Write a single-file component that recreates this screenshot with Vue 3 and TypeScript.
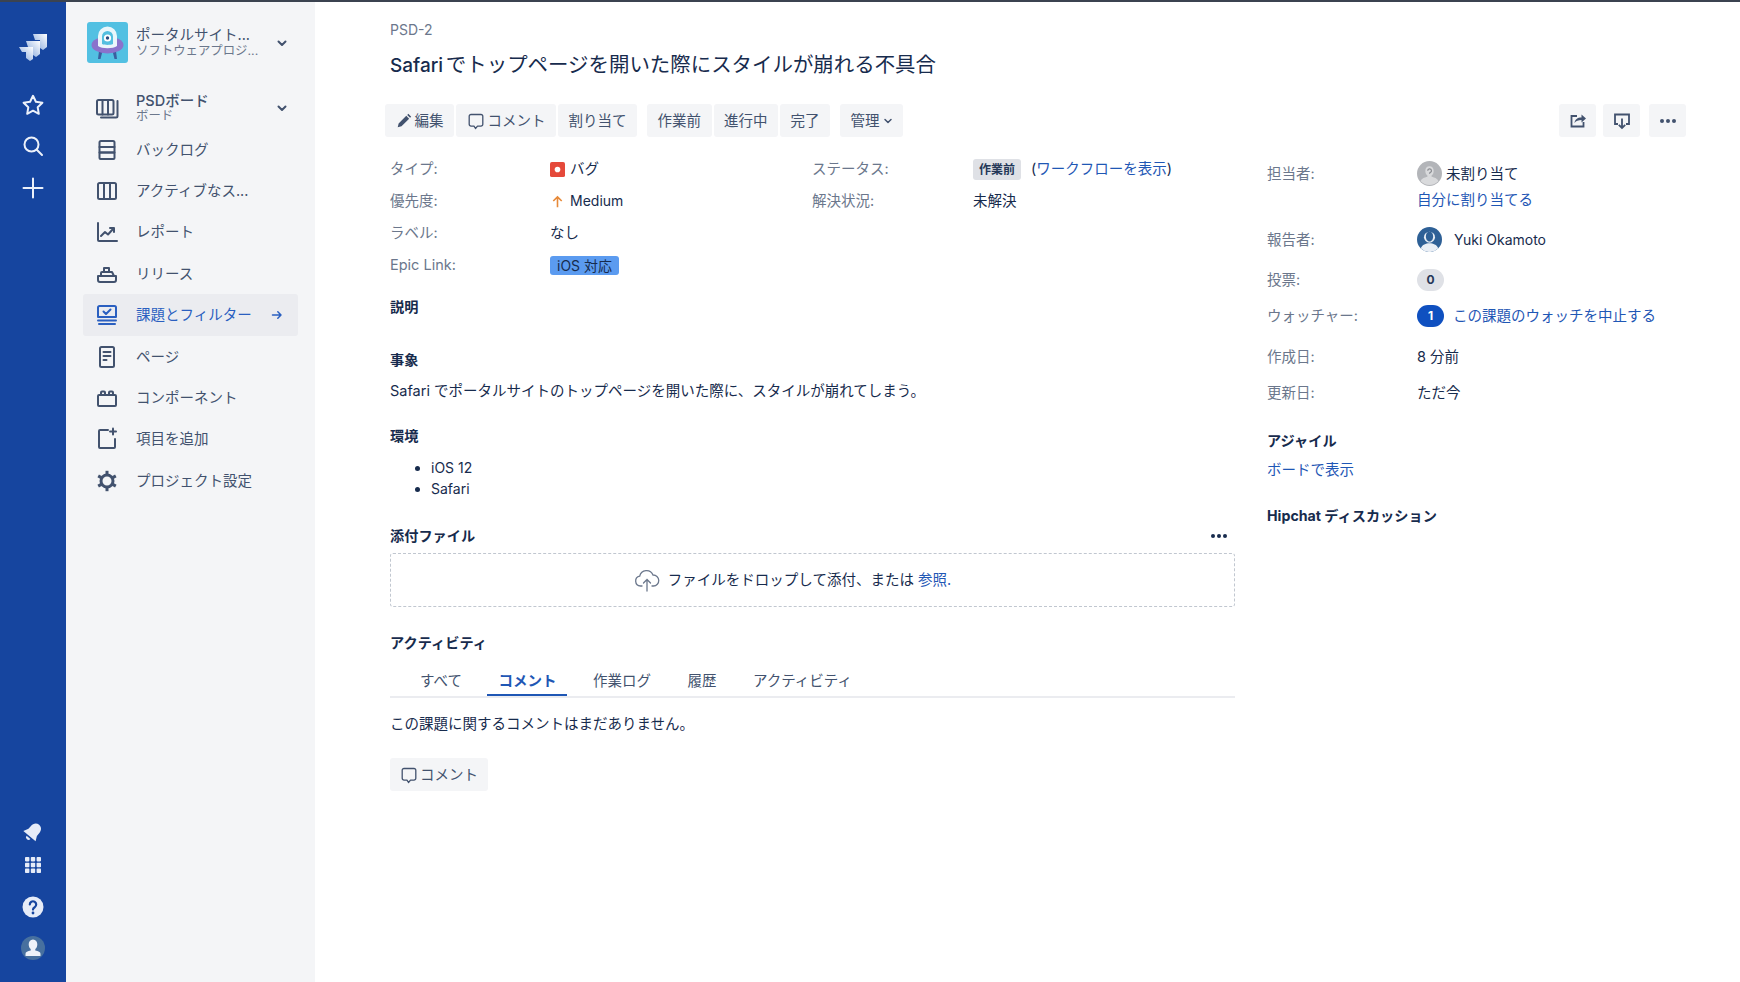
<script setup lang="ts">
interface NavItem {
  label: string;
  paths: string[];
  active?: boolean;
  heavy?: boolean;
}

const navItems: NavItem[] = [
  {
    label: "バックログ",
    paths: [
      "M6 3h12a1.500 1.500 0 0 1 1.500 1.500V9H4.500V4.500A1.500 1.500 0 0 1 6 3z",
      "M4.500 9h15v5.500h-15z",
      "M4.500 14.500h15V20a1 1 0 0 1-1 1h-13a1 1 0 0 1-1-1z",
    ],
  },
  {
    label: "アクティブなス...",
    paths: ["M4.500 4h15A1.500 1.500 0 0 1 21 5.500v13a1.500 1.500 0 0 1-1.500 1.500h-15A1.500 1.500 0 0 1 3 18.500v-13A1.500 1.500 0 0 1 4.500 4z", "M9 4v16", "M15 4v16"],
  },
  {
    label: "レポート",
    paths: ["M3 3v17a1 1 0 0 0 1 1h18", "M6 16l4-4 3 2.500 5-5.500", "M15 8h4v4"],
  },
  {
    label: "リリース",
    paths: ["M3 14h18v4a2 2 0 0 1-2 2H5a2 2 0 0 1-2-2z", "M6 14v-3a1 1 0 0 1 1-1h10l2 4", "M9 10V6h5v4"],
  },
  {
    label: "課題とフィルター",
    active: true,
    paths: ["M4.500 3h15A1.500 1.500 0 0 1 21 4.500V14H3V4.500A1.500 1.500 0 0 1 4.500 3z", "M8.500 8.500l2.500 2.500 4.500-4.500", "M3 17.500h18", "M4 21h16"],
  },
  {
    label: "ページ",
    paths: ["M6.500 2h11A1.500 1.500 0 0 1 19 3.500v17a1.500 1.500 0 0 1-1.500 1.500h-11A1.500 1.500 0 0 1 5 20.500v-17A1.500 1.500 0 0 1 6.500 2z", "M8.500 7h7", "M8.500 11h7", "M8.500 15h3"],
  },
  {
    label: "コンポーネント",
    paths: ["M4 9h16a1 1 0 0 1 1 1v9a1 1 0 0 1-1 1H4a1 1 0 0 1-1-1v-9a1 1 0 0 1 1-1z", "M6 9V6.500a1 1 0 0 1 1-1h2a1 1 0 0 1 1 1V9", "M14 9V6.500a1 1 0 0 1 1-1h2a1 1 0 0 1 1 1V9"],
  },
  {
    label: "項目を追加",
    paths: ["M13 3H5a1 1 0 0 0-1 1v16a1 1 0 0 0 1 1h14a1 1 0 0 0 1-1v-8", "M18 1.500v6", "M15 4.500h6"],
  },
  {
    label: "プロジェクト設定",
    heavy: true,
    paths: [
      "M12 6a6 6 0 1 0 0 12 6 6 0 0 0 0-12z",
      "M12 1.800v4",
      "M12 18.200v4",
      "M3.200 6.900l3.500 2",
      "M17.300 15.100l3.500 2",
      "M3.200 17.100l3.500-2",
      "M17.300 8.900l3.500-2",
    ],
  },
];

const detailRows = [
  { label: "タイプ:", value: "バグ", kind: "bug" },
  { label: "優先度:", value: "Medium", kind: "priority" },
  { label: "ラベル:", value: "なし", kind: "plain" },
  { label: "Epic Link:", value: "iOS 対応", kind: "epic" },
];

const tabs = ["すべて", "コメント", "作業ログ", "履歴", "アクティビティ"];
</script>

<template>
  <div class="page">
    <aside class="rail">
      <div class="rail-group top">
        <svg class="logo" viewBox="0 0 30 30" width="30" height="30">
          <defs>
            <linearGradient id="logoFade" x1="1" y1="0" x2="0" y2="1">
              <stop offset="0" stop-color="#ffffff" />
              <stop offset="1" stop-color="#7da2da" />
            </linearGradient>
          </defs>
          <path d="M15 2h14v13l-4 3-3-2V8h-5z" fill="url(#logoFade)" />
          <path d="M8 9h14v13l-4 3-3-2v-8h-5z" fill="url(#logoFade)" />
          <path d="M1 15h14v12l-3 2-4-3v-6H4z" fill="url(#logoFade)" />
        </svg>
        <svg class="rail-icon star" viewBox="0 0 24 24" width="24" height="24">
          <path d="M12 2.800l2.900 6 6.500.9-4.700 4.600 1.100 6.500-5.800-3.100-5.800 3.100 1.100-6.500-4.700-4.600 6.500-.9z" fill="none" stroke="#ecf1fa" stroke-width="2" stroke-linejoin="round" />
        </svg>
        <svg class="rail-icon search" viewBox="0 0 24 24" width="24" height="24">
          <circle cx="10.500" cy="10.500" r="7" fill="none" stroke="#ecf1fa" stroke-width="2" />
          <path d="M15.800 15.800l5.200 5.200" stroke="#ecf1fa" stroke-width="2" stroke-linecap="round" />
        </svg>
        <svg class="rail-icon plus" viewBox="0 0 24 24" width="24" height="24">
          <path d="M12 2.500v19M2.500 12h19" stroke="#ecf1fa" stroke-width="2" stroke-linecap="round" />
        </svg>
      </div>
      <div class="rail-group bottom">
        <svg class="rail-icon" viewBox="0 0 24 24" width="24" height="24">
          <g transform="rotate(40 12 12)" fill="#e6ecf8">
            <path d="M12 2.500c3.500 0 5.500 2.800 5.500 6.500v3.500l2.500 5H4l2.500-5V9c0-3.700 2-6.500 5.500-6.500z" />
            <path d="M9.500 19h5a2.500 2.500 0 0 1-5 0z" />
          </g>
        </svg>
        <svg class="rail-icon" viewBox="0 0 24 24" width="24" height="24">
          <g fill="#e6ecf8">
            <rect x="4" y="4" width="4.400" height="4.400" rx=".8" />
            <rect x="9.800" y="4" width="4.400" height="4.400" rx=".8" />
            <rect x="15.600" y="4" width="4.400" height="4.400" rx=".8" />
            <rect x="4" y="9.800" width="4.400" height="4.400" rx=".8" />
            <rect x="9.800" y="9.800" width="4.400" height="4.400" rx=".8" />
            <rect x="15.600" y="9.800" width="4.400" height="4.400" rx=".8" />
            <rect x="4" y="15.600" width="4.400" height="4.400" rx=".8" />
            <rect x="9.800" y="15.600" width="4.400" height="4.400" rx=".8" />
            <rect x="15.600" y="15.600" width="4.400" height="4.400" rx=".8" />
          </g>
        </svg>
        <svg class="rail-icon" viewBox="0 0 24 24" width="24" height="24">
          <circle cx="12" cy="12" r="10.500" fill="#e6ecf8" />
          <path d="M8.800 9.500a3.200 3.200 0 1 1 4.900 2.700c-1.100.7-1.700 1.200-1.700 2.400" fill="none" stroke="#16459f" stroke-width="2.200" stroke-linecap="round" />
          <circle cx="12" cy="18" r="1.400" fill="#16459f" />
        </svg>
        <svg class="rail-icon profile" viewBox="0 0 24 24" width="24" height="24">
          <circle cx="12" cy="12" r="12" fill="#47709f" />
          <path d="M12 3.500c2.800 0 4.300 2.200 4.300 4.800 0 2.200-.8 3.900-2 4.800v1.400c3 .7 5.200 1.500 5.200 3.300V20h-15v-2.200c0-1.800 2.200-2.600 5.200-3.300v-1.400c-1.200-.9-2-2.600-2-4.800 0-2.600 1.500-4.800 4.300-4.800z" fill="#eef2f9" />
        </svg>
      </div>
    </aside>

    <nav class="side">
      <div class="project">
        <svg class="project-avatar" viewBox="0 0 41 41" width="41" height="41">
          <rect width="41" height="41" rx="3" fill="#52c0e2" />
          <path d="M12 29l-1 8h2.500l2-8zM29 29l1 8h-2.500l-2-8z" fill="#3a5f9f" />
          <ellipse cx="20.500" cy="23" rx="16" ry="8.500" fill="#8a72cc" />
          <path d="M11 24V14a9.500 9.500 0 0 1 19 0v10c-4 3-15 3-19 0z" fill="#eaf6fb" />
          <path d="M15 22v-7.500a5.500 5.500 0 0 1 11 0V22c-3 1.200-8 1.200-11 0z" fill="#54bfe0" />
          <circle cx="20.500" cy="16" r="3.600" fill="#fff" />
          <circle cx="20.500" cy="16" r="1.700" fill="#2c4a80" />
        </svg>
        <div class="project-text">
          <span class="project-name">ポータルサイト...</span>
          <span class="sub">ソフトウェアプロジ...</span>
        </div>
        <svg class="chev" viewBox="0 0 12 12" width="12" height="12">
          <path d="M2.500 4.500L6 8l3.500-3.500" fill="none" stroke="#42526e" stroke-width="2" stroke-linecap="round" stroke-linejoin="round" />
        </svg>
      </div>

      <ul class="nav-list">
        <li class="nav-row">
          <svg class="nav-icon" viewBox="0 0 24 24" width="24" height="24">
            <path d="M3.500 4H17a1.500 1.500 0 0 1 1.500 1.500V17a1.500 1.500 0 0 1-1.500 1.500H3.500A1.500 1.500 0 0 1 2 17V5.500A1.500 1.500 0 0 1 3.500 4z" />
            <path d="M7.500 4v14.500M13 4v14.500M22.500 5v15a1.500 1.500 0 0 1-1.500 1.500H6" />
          </svg>
          <div class="board-text">
            <span class="board-name">PSDボード</span>
            <span class="sub">ボード</span>
          </div>
          <svg class="chev" viewBox="0 0 12 12" width="12" height="12">
            <path d="M2.500 4.500L6 8l3.500-3.500" fill="none" stroke="#42526e" stroke-width="2" stroke-linecap="round" stroke-linejoin="round" />
          </svg>
        </li>
        <li v-for="item in navItems" :key="item.label" :class="['nav-row', { active: item.active }]">
          <svg :class="['nav-icon', { heavy: item.heavy }]" viewBox="0 0 24 24" width="24" height="24">
            <path v-for="d in item.paths" :key="d" :d="d" />
          </svg>
          <span>{{ item.label }}</span>
          <svg v-if="item.active" class="arrow" viewBox="0 0 12 12" width="12" height="12">
            <path d="M1.500 6h8.500M6.800 2.800L10 6 6.800 9.200" fill="none" stroke="#2a5fc0" stroke-width="1.500" stroke-linecap="round" stroke-linejoin="round" />
          </svg>
        </li>
      </ul>
    </nav>

    <main class="main">
      <div class="issue-key latin">PSD-2</div>
      <h1 class="title"><span class="title-latin">Safari</span> でトップページを開いた際にスタイルが崩れる不具合</h1>

      <div class="toolbar">
        <div class="btn-group">
          <button class="btn">
            <svg viewBox="0 0 14 14" width="16" height="16">
              <path d="M1.500 12.500l.8-3.300 6.700-6.700 2.500 2.500-6.700 6.700zM9.800 1.700l1-1 2.500 2.500-1 1z" fill="#42526e" />
            </svg>
            編集
          </button>
          <button class="btn">
            <svg viewBox="0 0 18 18" width="18" height="18">
              <path d="M4 2.500h10A1.800 1.800 0 0 1 15.800 4.300v8a1.800 1.800 0 0 1-1.800 1.800h-3.500L8.500 16.500 7 14.100H4a1.800 1.800 0 0 1-1.800-1.800v-8A1.800 1.800 0 0 1 4 2.500z" fill="none" stroke="#42526e" stroke-width="1.300" stroke-linejoin="round" />
            </svg>
            コメント
          </button>
          <button class="btn">割り当て</button>
        </div>
        <div class="btn-group">
          <button class="btn">作業前</button>
          <button class="btn">進行中</button>
          <button class="btn">完了</button>
        </div>
        <div class="btn-group">
          <button class="btn">
            管理
            <svg viewBox="0 0 10 10" width="10" height="10">
              <path d="M2 3.500L5 6.500l3-3" fill="none" stroke="#42526e" stroke-width="1.500" stroke-linecap="round" stroke-linejoin="round" />
            </svg>
          </button>
        </div>
        <div class="btn-group end">
          <button class="btn square">
            <svg viewBox="0 0 18 18" width="18" height="18">
              <path d="M8 4H2.500v10.500h12V10" fill="none" stroke="#42526e" stroke-width="1.800" />
              <path d="M5.500 11c.3-3.500 3-5.500 7-5.500V2.500L17 6.500l-4.500 4V8c-3 0-5.500.8-7 3z" fill="#42526e" />
            </svg>
          </button>
          <button class="btn square">
            <svg viewBox="0 0 18 18" width="18" height="18">
              <path d="M5 12H2V2.500h14V12h-3" fill="none" stroke="#42526e" stroke-width="1.800" />
              <path d="M9 6.500v9.500M5.800 12.800L9 16l3.200-3.200" fill="none" stroke="#42526e" stroke-width="1.800" />
            </svg>
          </button>
          <button class="btn square last">
            <span class="dots"><i></i><i></i><i></i></span>
          </button>
        </div>
      </div>

      <div class="columns">
        <section class="content">
          <div class="details">
            <template v-for="(row, i) in detailRows" :key="row.label">
              <span class="label">{{ row.label }}</span>
              <span class="value">
                <svg v-if="row.kind === 'bug'" class="type-icon" viewBox="0 0 16 16" width="15" height="15">
                  <rect width="16" height="16" rx="2" fill="#e5493a" />
                  <circle cx="8" cy="8" r="3" fill="#fff" />
                </svg>
                <svg v-if="row.kind === 'priority'" class="type-icon" viewBox="0 0 16 16" width="15" height="15">
                  <path d="M8 14V3M3.500 7.500L8 3l4.500 4.500" fill="none" stroke="#e78a3a" stroke-width="1.700" />
                </svg>
                <span v-if="row.kind === 'epic'" class="epic">{{ row.value }}</span>
                <span v-else-if="row.kind === 'priority'" class="latin">{{ row.value }}</span>
                <template v-else>{{ row.value }}</template>
              </span>
              <template v-if="i === 0">
                <span class="label">ステータス:</span>
                <span class="value">
                  <span class="status">作業前</span>
                  <span class="workflow">(<a>ワークフローを表示</a>)</span>
                </span>
              </template>
              <template v-else-if="i === 1">
                <span class="label">解決状況:</span>
                <span class="value">未解決</span>
              </template>
              <template v-else>
                <span></span>
                <span></span>
              </template>
            </template>
          </div>

          <h2 class="heading description">説明</h2>
          <h3 class="heading sub-section">事象</h3>
          <p class="para">Safari でポータルサイトのトップページを開いた際に、スタイルが崩れてしまう。</p>
          <h3 class="heading env">環境</h3>
          <ul class="env-list latin">
            <li>iOS 12</li>
            <li>Safari</li>
          </ul>

          <div class="attach-head">
            <h2 class="heading">添付ファイル</h2>
            <span class="dots dark"><i></i><i></i><i></i></span>
          </div>
          <div class="dropzone">
            <svg viewBox="0 0 26 24" width="26" height="24">
              <path d="M8 18H6.500a5 5 0 0 1-.8-9.900A7 7 0 0 1 19 7a5.500 5.500 0 0 1 .5 11H18" fill="none" stroke="#6b778c" stroke-width="1.300" stroke-linecap="round" />
              <path d="M13 23V11.500M9.500 15l3.500-3.500 3.500 3.500" fill="none" stroke="#6b778c" stroke-width="1.300" stroke-linecap="round" />
            </svg>
            <span>ファイルをドロップして添付、または <a>参照</a><a>.</a></span>
          </div>

          <h2 class="heading activity">アクティビティ</h2>
          <div class="tabs">
            <span v-for="tab in tabs" :key="tab" :class="['tab', { current: tab === 'コメント' }]">{{ tab }}</span>
          </div>
          <p class="para no-comment">この課題に関するコメントはまだありません。</p>
          <button class="btn comment-btn">
            <svg viewBox="0 0 18 18" width="18" height="18">
              <path d="M4 2.500h10A1.800 1.800 0 0 1 15.800 4.300v8a1.800 1.800 0 0 1-1.800 1.800h-3.500L8.500 16.500 7 14.100H4a1.800 1.800 0 0 1-1.800-1.800v-8A1.800 1.800 0 0 1 4 2.500z" fill="none" stroke="#42526e" stroke-width="1.300" stroke-linejoin="round" />
            </svg>
            コメント
          </button>
        </section>

        <aside class="meta">
          <div class="meta-row first">
            <span class="label">担当者:</span>
            <div>
              <div class="person">
                <svg viewBox="0 0 24 24" width="25" height="25">
                  <circle cx="12" cy="12" r="12" fill="#b3b5b9" />
                  <path d="M12 5c2.600 0 4 2 4 4.500 0 2-.8 3.500-2 4.500v1c3 .7 6 1.800 6.500 4.500a12 12 0 0 1-17 0C4 16.800 7 15.700 10 15v-1c-1.200-1-2-2.500-2-4.500C8 7 9.400 5 12 5z" fill="#d9dadc" />
                  <path d="M10.300 9.300a1.800 1.800 0 1 1 2.600 1.600c-.6.300-.9.700-.9 1.300" fill="none" stroke="#8d8f94" stroke-width="1.200" />
                </svg>
                <span class="unassigned">未割り当て</span>
              </div>
              <a class="assign-me">自分に割り当てる</a>
            </div>
          </div>
          <div class="meta-row reporter-row">
            <span class="label">報告者:</span>
            <div class="person">
              <svg viewBox="0 0 24 24" width="25" height="25">
                <circle cx="12" cy="12" r="12" fill="#2e6096" />
                <circle cx="12" cy="9.800" r="5.300" fill="#e9eef5" />
                <path d="M12 4.500c2.200 0 3.500 1.800 3.500 4.500 0 2.400-1.300 4.800-3.500 4.800S8.500 11.400 8.500 9c0-2.700 1.300-4.500 3.500-4.500z" fill="#2e6096" />
                <path d="M3.500 20.500C5 16.800 8.500 15.500 12 15.500s7 1.300 8.500 5a12 12 0 0 1-17 0z" fill="#e9eef5" />
              </svg>
              <span class="reporter latin">Yuki Okamoto</span>
            </div>
          </div>
          <div class="meta-row">
            <span class="label">投票:</span>
            <span class="pill">0</span>
          </div>
          <div class="meta-row watchers">
            <span class="label">ウォッチャー:</span>
            <div class="watch">
              <span class="pill on">1</span>
              <a>この課題のウォッチを中止する</a>
            </div>
          </div>
          <div class="meta-row created">
            <span class="label">作成日:</span>
            <span class="value">8 分前</span>
          </div>
          <div class="meta-row">
            <span class="label">更新日:</span>
            <span class="value">ただ今</span>
          </div>

          <h2 class="heading agile">アジャイル</h2>
          <a class="board-link">ボードで表示</a>
          <h2 class="heading hipchat">Hipchat ディスカッション</h2>
        </aside>
      </div>
    </main>
  </div>
</template>

<style scoped>
.page {
  display: flex;
  width: 1740px;
  height: 982px;
  overflow: hidden;
  box-sizing: border-box;
  border-top: 2px solid #3b4350;
  background: #fff;
  color: #172b4d;
  font-family: Inter, "Noto Sans CJK JP", sans-serif;
  font-size: 14.5px;
  line-height: 20px;
}
.latin {
  font-size: 14px;
}
.rail {
  flex: none;
  width: 66px;
  background: #16459f;
  display: flex;
  flex-direction: column;
  justify-content: space-between;
  align-items: center;
}
.rail-group {
  display: flex;
  flex-direction: column;
  align-items: center;
}
.rail-group.top {
  padding-top: 30px;
}
.logo {
  margin-bottom: 31px;
}
.rail-icon {
  display: block;
}
.rail-icon.star {
  margin-bottom: 17px;
}
.rail-icon.search {
  margin-bottom: 18px;
}
.rail-group.bottom {
  gap: 10px;
  padding-bottom: 22px;
}
.rail-group.bottom .rail-icon:nth-child(1) {
  margin-bottom: -1px;
}
.rail-group.bottom .rail-icon:nth-child(2) {
  margin-bottom: 8px;
}
.rail-group.bottom .rail-icon:nth-child(3) {
  margin-bottom: 7px;
}
.side {
  flex: none;
  width: 249px;
  background: #f4f5f7;
  color: #42526e;
}
.project {
  display: flex;
  align-items: center;
  margin: 20px 27px 0 21px;
}
.project-avatar {
  flex: none;
  margin-right: 8px;
}
.project-text,
.board-text {
  display: flex;
  flex-direction: column;
  flex: 1;
}
.project-name {
  line-height: 16px;
}
.sub {
  color: #6b778c;
  font-size: 12.400px;
  line-height: 16px;
}
.board-name {
  font-weight: 500;
  line-height: 16px;
}
.board-text .sub {
  line-height: 14px;
}
.chev {
  flex: none;
}
.nav-list {
  list-style: none;
  margin: 0;
  padding: 0;
  margin-top: 24.500px;
}
.nav-row {
  display: flex;
  align-items: center;
  height: 41.400px;
  gap: 17px;
  margin: 0 17px;
  padding: 0 10px 0 12px;
  border-radius: 3px;
  box-sizing: border-box;
}
.nav-row .chev {
  margin-left: auto;
}
.nav-row.active {
  background: #ebecf0;
  color: #2a5fc0;
}
.nav-icon {
  flex: none;
  fill: none;
  stroke: currentColor;
  stroke-width: 2;
  stroke-linecap: round;
  stroke-linejoin: round;
}
.nav-icon.heavy {
  stroke-width: 3;
  stroke-linecap: butt;
}
.nav-row:not(.active) .nav-icon {
  stroke: #42526e;
}
.arrow {
  margin-left: auto;
  margin-right: 5px;
}
.main {
  flex: 1;
  min-width: 0;
  padding: 18px 54px 0 75px;
}
.issue-key {
  color: #6b778c;
}
.title {
  margin: 11px 0 0;
  font-size: 20.450px;
  line-height: 28px;
  font-weight: 400;
  word-spacing: -3px;
  color: #172b4d;
}
.title-latin {
  font-size: 19px;
  font-weight: 500;
}
.toolbar {
  display: flex;
  gap: 10px;
  margin: 24px 0 0 -5px;
}
.btn-group {
  display: flex;
  gap: 2px;
}
.btn-group.end {
  margin-left: auto;
  gap: 7px;
}
.btn {
  display: flex;
  align-items: center;
  justify-content: center;
  gap: 3px;
  height: 33px;
  padding: 0 10.500px;
  border: 0;
  border-radius: 3px;
  background: #f4f5f7;
  color: #42526e;
  font: inherit;
}
.btn.square {
  width: 37px;
  padding: 0;
}
.btn.square.last {
  margin-left: 2px;
}
.dots {
  display: inline-flex;
  gap: 2px;
}
.dots i {
  display: block;
  width: 4px;
  height: 4px;
  border-radius: 50%;
  background: #42526e;
}
.dots.dark i {
  background: #172b4d;
}
.columns {
  display: flex;
  gap: 32px;
}
.content {
  flex: none;
  width: 845px;
}
.details {
  display: grid;
  grid-template-columns: 160px 262px 161px 1fr;
  grid-auto-rows: 32px;
  align-items: center;
  margin-top: 16px;
}
.label {
  color: #6b778c;
}
.value {
  display: flex;
  align-items: center;
  color: #172b4d;
}
.type-icon {
  margin-right: 5px;
}
.epic {
  padding: 0 7px;
  border-radius: 3px;
  background: #5b9bf0;
  color: #172b4d;
  font-size: 14px;
  line-height: 19px;
}
.status {
  padding: 0 6px;
  border-radius: 3px;
  background: #dfe1e6;
  font-size: 12px;
  font-weight: 700;
  line-height: 21px;
  color: #253858;
}
.workflow {
  margin-left: 10px;
}
a {
  color: #1f57b5;
}
.heading {
  margin: 0;
  font-size: 14.200px;
  line-height: 20px;
  font-weight: 700;
  color: #172b4d;
}
.description {
  margin-top: 16px;
}
.sub-section {
  margin-top: 33px;
}
.para {
  margin: 11px 0 0;
}
.env {
  margin-top: 25px;
}
.env-list {
  margin: 11px 0 0;
  padding-left: 41px;
  line-height: 21px;
}
.attach-head {
  display: flex;
  justify-content: space-between;
  align-items: center;
  margin-top: 27px;
  padding-right: 8px;
}
.dropzone {
  display: flex;
  align-items: center;
  justify-content: center;
  gap: 8px;
  height: 54px;
  box-sizing: border-box;
  margin-top: 7px;
  padding-right: 40px;
  border: 1px dashed #c1c7d0;
  border-radius: 3px;
}
.activity {
  margin-top: 26px;
}
.tabs {
  display: flex;
  gap: 14.500px;
  margin-top: 12px;
  padding-left: 19px;
  border-bottom: 2px solid #ebecf0;
  height: 33px;
  box-sizing: border-box;
}
.tab {
  padding: 6px 11px 0;
  height: 31px;
  box-sizing: border-box;
  color: #42526e;
}
.tab.current {
  border-bottom: 2px solid #1f57b5;
  font-weight: 700;
  color: #1f57b5;
}
.no-comment {
  margin-top: 16px;
}
.comment-btn {
  margin-top: 24px;
  width: 98px;
  padding: 0;
  gap: 2px;
  height: 33px;
}
.meta {
  flex: 1;
  min-width: 0;
  padding-top: 24px;
}
.meta-row {
  display: grid;
  grid-template-columns: 150px 1fr;
  align-items: center;
  margin-bottom: 16px;
}
.meta-row.first {
  align-items: start;
  height: 50px;
}
.meta-row.first .label {
  line-height: 25px;
}
.meta-row.reporter-row {
  margin-bottom: 17px;
}
.meta-row.watchers {
  margin-top: -2px;
  margin-bottom: 20px;
}
.person {
  display: flex;
  align-items: center;
}
.unassigned {
  margin-left: 4px;
}
.reporter {
  margin-left: 12px;
}
.assign-me {
  display: block;
  margin-top: 4px;
}
.pill {
  display: inline-block;
  width: 27px;
  height: 22px;
  border-radius: 11px;
  background: #dfe1e6;
  text-align: center;
  font-size: 12px;
  font-weight: 700;
  line-height: 22px;
  color: #253858;
}
.pill.on {
  background: #0f50c0;
  color: #fff;
}
.watch {
  display: flex;
  align-items: center;
  gap: 9px;
}
.agile {
  margin-top: 28px;
}
.board-link {
  display: block;
  margin-top: 9px;
}
.hipchat {
  margin-top: 26px;
}
</style>

<style>
body {
  margin: 0;
}
</style>
